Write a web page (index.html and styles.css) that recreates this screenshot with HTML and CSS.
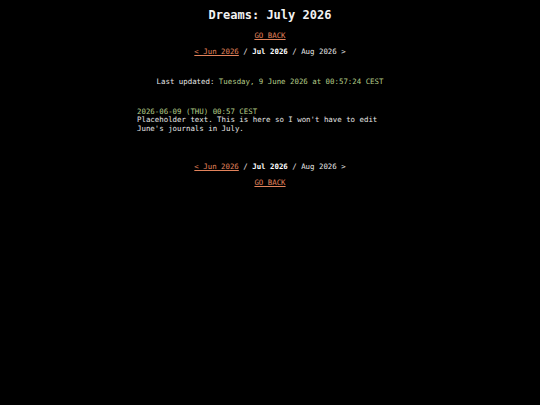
FILE: index.html
```html
<!DOCTYPE html>
<html>
<head>
<meta charset="utf-8">
<link rel="stylesheet" href="styles.css">
</head>
<body>
<h1 class="title">Dreams: July 2026</h1>
<p class="center"><a href="#">GO BACK</a></p>
<p class="center nav"><a href="#">&lt; Jun 2026</a> / <b>Jul 2026</b> / Aug 2026 &gt;</p>
<p class="center updated">Last updated: <span class="green">Tuesday, 9 June 2026 at 00:57:24 CEST</span></p>
<div class="entries">
  <div class="entry">
    <div class="green">2026-06-09 (THU) 00:57 CEST</div>
    <div>Placeholder text. This is here so I won't have to edit June's journals in July.</div>
  </div>
</div>
<p class="center nav bottom"><a href="#">&lt; Jun 2026</a> / <b>Jul 2026</b> / Aug 2026 &gt;</p>
<p class="center"><a href="#">GO BACK</a></p>
</body>
</html>
```
FILE: styles.css
```css
html, body {
  background: #000;
}
body {
  margin: 8px;
  color: #e6e6e6;
  font-family: "DejaVu Sans Mono", monospace;
  font-size: 7.4px;
  line-height: 8.4px;
}
.title {
  font-size: 12px;
  line-height: 14px;
  margin: 0 0 10px;
  text-align: center;
  color: #f2f2f2;
}
p {
  margin: 0 0 7.6px;
}
.center {
  text-align: center;
}
a {
  color: #e2835c;
}
b {
  color: #fff;
}
.green {
  color: #b4cc88;
}
.updated {
  margin-top: 22px;
}
.entries {
  width: 266px;
  margin: 21px auto 0;
}
.entry {
  margin-bottom: 0;
}
.nav.bottom {
  margin-top: 29.5px;
}
```
